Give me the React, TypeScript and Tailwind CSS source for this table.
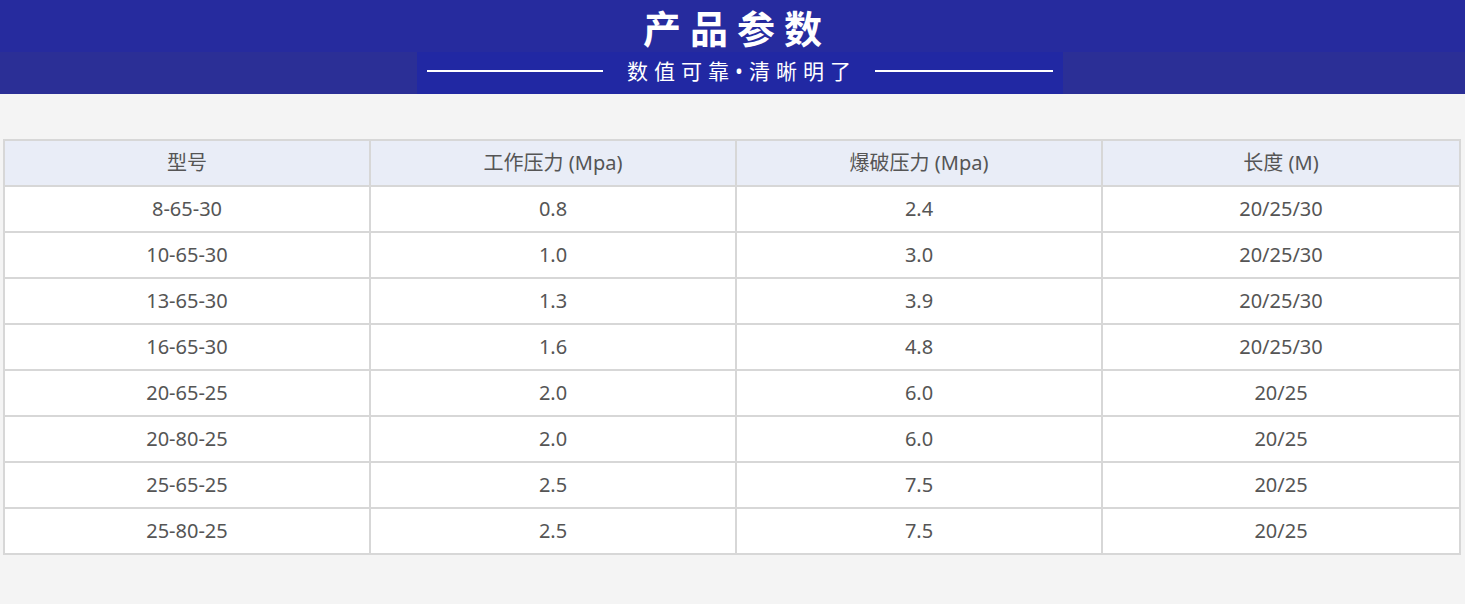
import React from 'react';

const rows = [
    ['8-65-30', '0.8', '2.4', '20/25/30'],
    ['10-65-30', '1.0', '3.0', '20/25/30'],
    ['13-65-30', '1.3', '3.9', '20/25/30'],
    ['16-65-30', '1.6', '4.8', '20/25/30'],
    ['20-65-25', '2.0', '6.0', '20/25'],
    ['20-80-25', '2.0', '6.0', '20/25'],
    ['25-65-25', '2.5', '7.5', '20/25'],
    ['25-80-25', '2.5', '7.5', '20/25'],
];

const headers = ['型号', '工作压力 (Mpa)', '爆破压力 (Mpa)', '长度 (M)'];

const App: React.FC = () => {
    return (
        <div className="w-[1465px] h-[604px] bg-[#f4f4f4] overflow-hidden" style={{ fontFamily: '"Noto Sans", "Noto Sans CJK SC", sans-serif' }}>
            {/* Banner */}
            <div className="h-[94px] bg-[#262b9e] flex flex-col">
                <div className="h-[52px] flex items-center justify-center">
                    <h1 className="text-white font-bold text-[38px] tracking-[9px] leading-none pl-[9px] pt-[4px]">产品参数</h1>
                </div>
                <div className="h-[42px] flex bg-[#2b2f96]">
                    <div className="w-[417px]" />
                    <div className="w-[646px] bg-[#2128a3] flex items-center justify-center gap-[18px] pb-[4px]">
                        <div className="w-[176px] h-[2px] bg-white" />
                        <span className="text-white text-[21px] tracking-[6px] leading-none pl-[6px]">数值可靠•清晰明了</span>
                        <div className="w-[178px] h-[2px] bg-white" />
                    </div>
                    <div className="flex-1" />
                </div>
            </div>

            {/* Table */}
            <div className="pt-[45px] pl-[3px]">
                <table className="w-[1456px] border-collapse border-2 border-[#d7d7d7] table-fixed text-[#555555] text-[20px]">
                    <colgroup>
                        <col className="w-[366px]" />
                        <col className="w-[366px]" />
                        <col className="w-[366px]" />
                        <col className="w-[358px]" />
                    </colgroup>
                    <thead>
                        <tr className="bg-[#e9edf7] h-[46px]">
                            {headers.map(h => (
                                <th key={h} className="border-2 border-[#d7d7d7] font-normal text-center">{h}</th>
                            ))}
                        </tr>
                    </thead>
                    <tbody className="bg-white">
                        {rows.map((r, i) => (
                            <tr key={i} className="h-[46px]">
                                {r.map((c, j) => (
                                    <td key={j} className="border-2 border-[#d7d7d7] text-center">{c}</td>
                                ))}
                            </tr>
                        ))}
                    </tbody>
                </table>
            </div>
        </div>
    );
};

export default App;
